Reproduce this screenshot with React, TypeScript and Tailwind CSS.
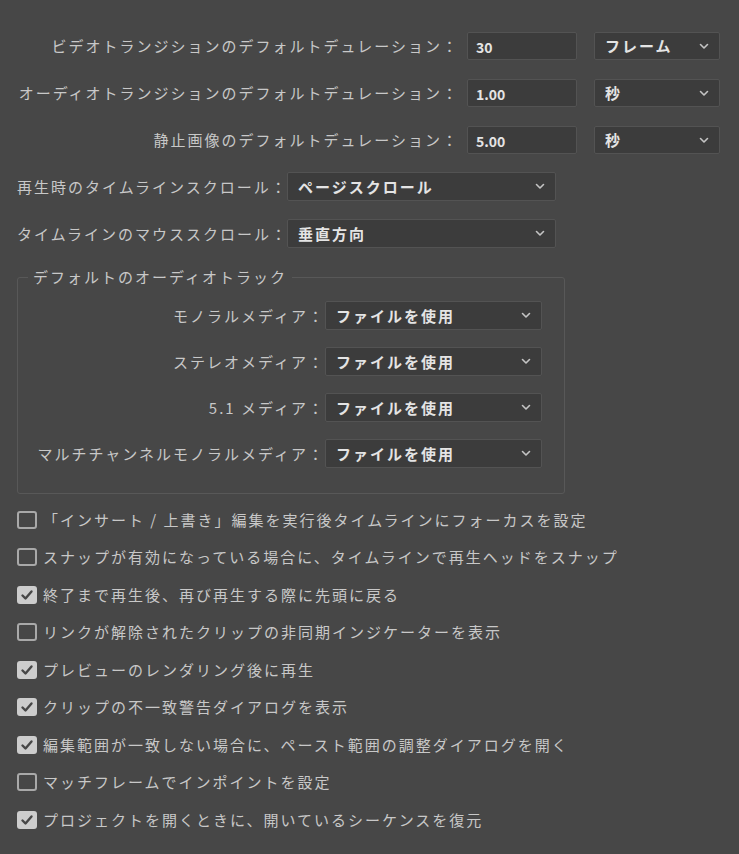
import React from 'react';

const font = { fontFamily: '"Noto Sans CJK JP", "Noto Sans", sans-serif' };

const Chevron: React.FC = () => (
  <svg width="10" height="7" viewBox="0 0 10 7" className="shrink-0">
    <path d="M1.5 1.5 L5 5 L8.5 1.5" fill="none" stroke="#c4c4c4" strokeWidth="1.6" strokeLinecap="round" strokeLinejoin="round" />
  </svg>
);

interface SelectProps {
  value: string;
  className: string;
}

const Select: React.FC<SelectProps> = ({ value, className }) => (
  <div className={`flex items-center justify-between rounded-[2px] border border-[#535353] bg-[#3c3c3c] pl-[10px] pr-[10px] ${className}`}>
    <span className="font-bold text-[#e4e4e4]">{value}</span>
    <Chevron />
  </div>
);

const NumberInput: React.FC<{ value: string }> = ({ value }) => (
  <div className="flex h-[28px] w-[110px] items-end rounded-[2px] border border-[#535353] bg-[#3c3c3c] pb-[3px] pl-[8px]">
    <span className="text-[14px] font-semibold leading-[18px] tracking-normal text-[#e4e4e4]">{value}</span>
  </div>
);

const Checkbox: React.FC<{ checked: boolean }> = ({ checked }) =>
  checked ? (
    <div className="flex h-[18px] w-[20px] shrink-0 items-center justify-center rounded-[3px] bg-[#cdcdcd]">
      <svg width="14" height="12" viewBox="0 0 14 12">
        <path d="M2.5 6.5 L5.5 9.5 L11.5 2.5" fill="none" stroke="#474747" strokeWidth="2.4" strokeLinecap="round" strokeLinejoin="round" />
      </svg>
    </div>
  ) : (
    <div className="h-[18px] w-[20px] shrink-0 rounded-[3px] border-2 border-[#a9a9a9]" />
  );

const durations = [
  { label: 'ビデオトランジションのデフォルトデュレーション：', value: '30', unit: 'フレーム' },
  { label: 'オーディオトランジションのデフォルトデュレーション：', value: '1.00', unit: '秒' },
  { label: '静止画像のデフォルトデュレーション：', value: '5.00', unit: '秒' },
];

const scrolls = [
  { label: '再生時のタイムラインスクロール：', value: 'ページスクロール' },
  { label: 'タイムラインのマウススクロール：', value: '垂直方向' },
];

const tracks = ['モノラルメディア：', 'ステレオメディア：', '5.1 メディア：', 'マルチチャンネルモノラルメディア：'];

const options = [
  { text: '「インサート / 上書き」編集を実行後タイムラインにフォーカスを設定', checked: false },
  { text: 'スナップが有効になっている場合に、タイムラインで再生ヘッドをスナップ', checked: false },
  { text: '終了まで再生後、再び再生する際に先頭に戻る', checked: true },
  { text: 'リンクが解除されたクリップの非同期インジケーターを表示', checked: false },
  { text: 'プレビューのレンダリング後に再生', checked: true },
  { text: 'クリップの不一致警告ダイアログを表示', checked: true },
  { text: '編集範囲が一致しない場合に、ペースト範囲の調整ダイアログを開く', checked: true },
  { text: 'マッチフレームでインポイントを設定', checked: false },
  { text: 'プロジェクトを開くときに、開いているシーケンスを復元', checked: true },
];

export default function App() {
  return (
    <div className="min-h-screen w-full bg-[#474747] pt-[32px] text-[15px] leading-[20px] tracking-[2px] text-[#c8c8c8]" style={font}>
      <div className="flex flex-col gap-[19px]">
        {durations.map((d) => (
          <div key={d.label} className="flex items-center">
            <div className="w-[459px] whitespace-nowrap text-right">{d.label}</div>
            <div className="ml-[8px]">
              <NumberInput value={d.value} />
            </div>
            <Select value={d.unit} className="ml-[17px] h-[28px] w-[126px]" />
          </div>
        ))}
      </div>

      <div className="mt-[18px] flex flex-col gap-[18px] pl-[17px]">
        {scrolls.map((s) => (
          <div key={s.label} className="flex items-center">
            <div className="w-[270px] whitespace-nowrap">{s.label}</div>
            <Select value={s.value} className="h-[29px] w-[269px]" />
          </div>
        ))}
      </div>

      <fieldset className="mx-[17px] mt-[19px] w-[548px] rounded-[3px] border border-[#585858] pb-[25px]">
        <legend className="ml-[10px] px-[5px] leading-[20px]">デフォルトのオーディオトラック</legend>
        <div className="mt-[14px] flex flex-col gap-[17px]">
          {tracks.map((t) => (
            <div key={t} className="flex items-center">
              <div className="w-[307px] whitespace-nowrap text-right">{t}</div>
              <Select value="ファイルを使用" className="h-[29px] w-[217px]" />
            </div>
          ))}
        </div>
      </fieldset>

      <div className="mt-[7px] flex flex-col pl-[17px]">
        {options.map((o) => (
          <div key={o.text} className="flex h-[37.5px] items-center gap-[6px]">
            <Checkbox checked={o.checked} />
            <span className="whitespace-nowrap">{o.text}</span>
          </div>
        ))}
      </div>
    </div>
  );
}
